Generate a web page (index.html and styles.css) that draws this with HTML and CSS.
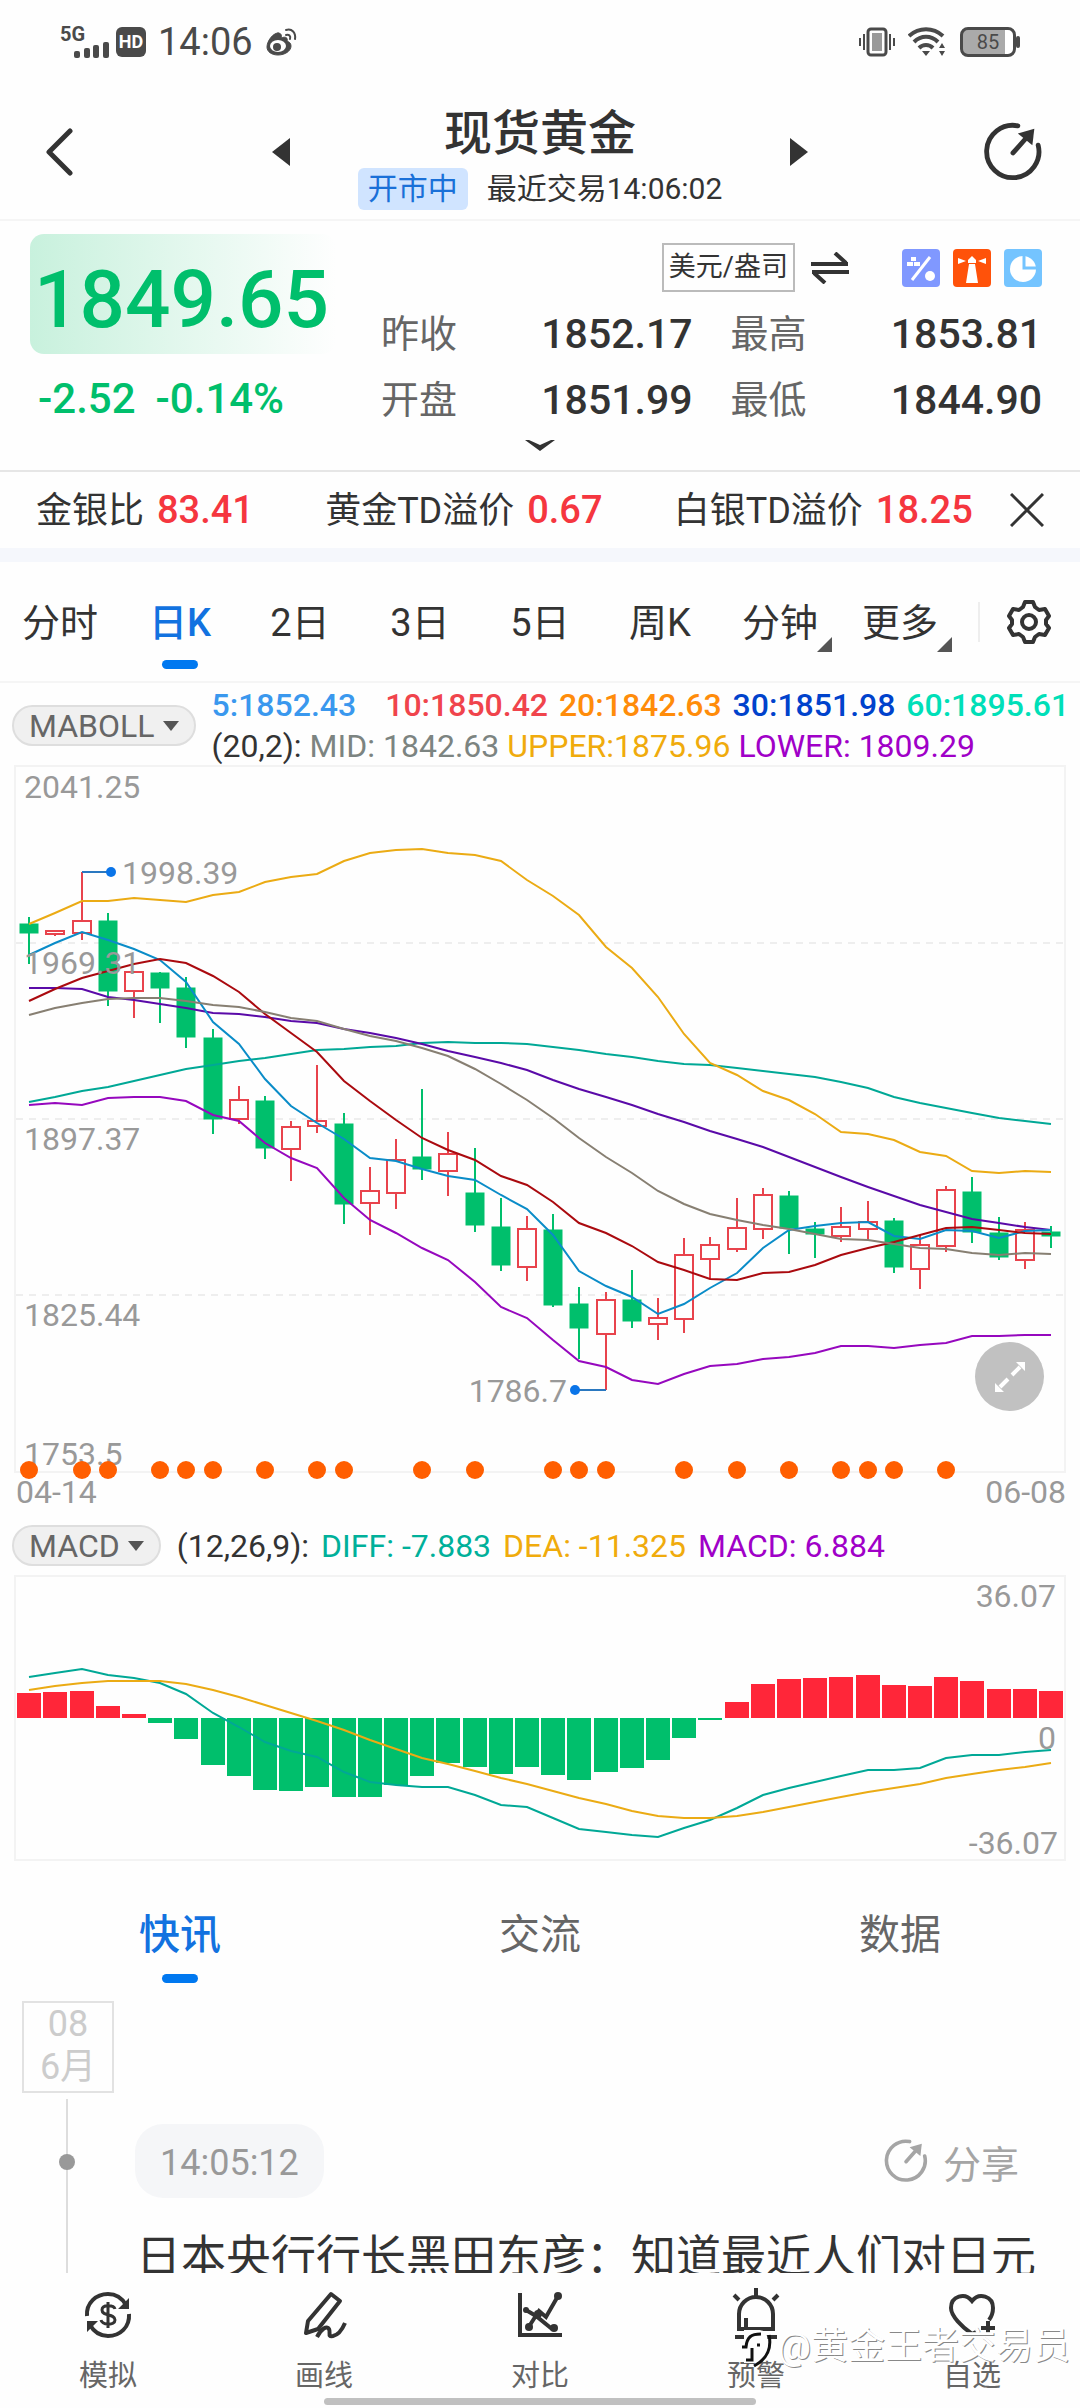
FILE: index.html
```html
<!DOCTYPE html>
<html lang="zh-CN">
<head>
    <meta charset="UTF-8">
    <meta name="viewport" content="width=device-width, initial-scale=1.0">
    <title>现货黄金</title>
    <link rel="stylesheet" href="styles.css">
</head>
<body>
    <div class="app">
        <div class="status-bar">
            <div class="status-left">
                <div class="signal">
                    <span>5G</span>
                    <svg width="36" height="16" viewBox="0 0 36 16" fill="#4a4a4a">
                        <rect x="0" y="9" width="6" height="7" rx="2"/>
                        <rect x="10" y="6" width="6" height="10" rx="2"/>
                        <rect x="19" y="3" width="6" height="13" rx="2"/>
                        <rect x="29" y="0" width="6" height="16" rx="2"/>
                    </svg>
                </div>
                <span class="hd">HD</span>
                <span class="clock">14:06</span>
                <svg width="32" height="30" viewBox="0 0 32 30" fill="none" stroke="#4a4a4a" stroke-width="3" stroke-linecap="round">
                    <path d="M13 6C8 6 2 14 2 20c0 5 5 8 11 8 7 0 13-4 13-9 0-3-2-4-4-5 1-3-1-5-6-3 1-3 0-5-3-5z" fill="#4a4a4a" stroke-width="1"/>
                    <ellipse cx="13" cy="19" rx="8" ry="6" fill="#fff" stroke="none"/>
                    <circle cx="12" cy="20" r="4" fill="#4a4a4a" stroke="none"/>
                    <path d="M21 8c3-1 5 1 4 4M21 3c6-2 10 3 9 9" stroke-width="2"/>
                </svg>
            </div>
            <div class="status-right">
                <svg width="38" height="30" viewBox="0 0 38 30" fill="none" stroke="#4a4a4a" stroke-width="3">
                    <rect x="10" y="2" width="18" height="26" rx="3"/>
                    <rect x="14" y="6" width="10" height="18" fill="#999" stroke="none"/>
                    <path d="M6 7v16M2 11v8M32 7v16M36 11v8" stroke-width="2"/>
                </svg>
                <svg width="40" height="30" viewBox="0 0 40 30" fill="none" stroke="#4a4a4a" stroke-width="4">
                    <path d="M1 9c10-9 24-9 34 0M6 15c7-7 17-7 24 0M11 21c4-4 10-4 14 0"/>
                    <path d="M14 24h8l-4 5zM31 21l3-5 3 5zM31 24l3 5 3-5z" fill="#4a4a4a" stroke="none"/>
                </svg>
                <div class="battery"><span>85</span></div>
            </div>
        </div>

        <header class="header">
            <button class="icon-btn" aria-label="返回">
                <svg width="28" height="48" viewBox="0 0 28 48" fill="none" stroke="#333" stroke-width="5" stroke-linecap="round" stroke-linejoin="round"><path d="M24 3L3 24l21 21"/></svg>
            </button>
            <div class="switcher">
                <button class="icon-btn" aria-label="上一个">
                    <svg width="18" height="28" viewBox="0 0 18 28" fill="#333"><path d="M18 0v28L0 14z"/></svg>
                </button>
                <div class="title">
                    <h1>现货黄金</h1>
                    <div class="subtitle"><span class="badge">开市中</span><span>最近交易14:06:02</span></div>
                </div>
                <button class="icon-btn" aria-label="下一个">
                    <svg width="18" height="28" viewBox="0 0 18 28" fill="#333"><path d="M0 0v28l18-14z"/></svg>
                </button>
            </div>
            <button class="icon-btn" aria-label="分享">
                <svg width="62" height="62" viewBox="0 0 64 64"><use href="#i-share"/></svg>
            </button>
        </header>

        <section class="quote">
            <div class="quote-price">
                <div class="price">1849.65</div>
                <div class="change"><span>-2.52</span><span>-0.14%</span></div>
            </div>
            <div class="quote-info">
                <div class="tools">
                    <button class="unit">美元/盎司</button>
                    <button class="icon-btn swap" aria-label="切换单位">
                        <svg width="38" height="32" viewBox="0 0 38 32" fill="none" stroke="#333" stroke-width="4"><path d="M0 12h37M24 1l11 10M38 20H1M14 31L3 21"/></svg>
                    </button>
                    <a href="#" class="tool" aria-label="比率">
                        <svg width="38" height="38" viewBox="0 0 38 38"><rect width="38" height="38" rx="4" fill="#8098ff"/><path d="M28 8L10 31" stroke="#fff" stroke-width="3"/><path d="M9 8h5v4H9zM5 13h6v4H5zM12 13h6v4h-6z" fill="#fff"/><circle cx="28" cy="27" r="5" fill="#fff"/></svg>
                    </a>
                    <a href="#" class="tool" aria-label="灯塔">
                        <svg width="38" height="38" viewBox="0 0 38 38"><rect width="38" height="38" rx="4" fill="#ff520a"/><path d="M16 15h6l3 19H13zM15 11l4-4 4 4v3h-8zM5 9l8 3-8 3zM33 9l-8 3 8 3z" fill="#fff"/></svg>
                    </a>
                    <a href="#" class="tool" aria-label="持仓">
                        <svg width="38" height="38" viewBox="0 0 38 38"><rect width="38" height="38" rx="4" fill="#74c4ff"/><circle cx="19" cy="20" r="13" fill="#fff"/><path d="M20 6v13h13" fill="none" stroke="#74c4ff" stroke-width="3"/></svg>
                    </a>
                </div>
                <dl class="stats">
                    <div><dt>昨收</dt><dd>1852.17</dd></div>
                    <div><dt>最高</dt><dd>1853.81</dd></div>
                    <div><dt>开盘</dt><dd>1851.99</dd></div>
                    <div><dt>最低</dt><dd>1844.90</dd></div>
                </dl>
            </div>
            <button class="icon-btn more" aria-label="展开">
                <svg width="30" height="11" viewBox="0 0 30 11" fill="#333"><path d="M0 0l4 0 11 5 11-5 4 0-15 11z"/></svg>
            </button>
        </section>

        <div class="premium">
            <span>金银比 <b>83.41</b></span>
            <span>黄金TD溢价 <b>0.67</b></span>
            <span>白银TD溢价 <b>18.25</b></span>
            <button class="icon-btn" aria-label="关闭">
                <svg width="34" height="34" viewBox="0 0 34 34" stroke="#333" stroke-width="3"><path d="M1 1l32 32M33 1L1 33"/></svg>
            </button>
        </div>

        <nav class="periods">
            <a href="#">分时</a>
            <a href="#" class="active">日K</a>
            <a href="#">2日</a>
            <a href="#">3日</a>
            <a href="#">5日</a>
            <a href="#">周K</a>
            <a href="#" class="drop">分钟</a>
            <a href="#" class="drop">更多</a>
            <button class="icon-btn settings" aria-label="设置">
                <svg width="46" height="46" viewBox="0 0 46 46" fill="none" stroke="#333" stroke-width="4" stroke-linejoin="round">
                    <path d="M19 3h8l2 5 4 3 6-1 4 7-3 4v4l3 4-4 7-6-1-4 3-2 5h-8l-2-5-4-3-6 1-4-7 3-4v-4l-3-4 4-7 6 1 4-3z"/>
                    <circle cx="23" cy="23" r="7"/>
                </svg>
            </button>
        </nav>

        <div class="indicator">
            <button class="pill">MABOLL <i></i></button>
            <div class="legend">
                <div class="ma">
                    <span class="c-ma5">5:1852.43</span>
                    <span class="c-ma10">10:1850.42</span>
                    <span class="c-ma20">20:1842.63</span>
                    <span class="c-ma30">30:1851.98</span>
                    <span class="c-ma60">60:1895.61</span>
                </div>
                <div class="values">
                    <span>(20,2):</span>
                    <span class="c-mid">MID: 1842.63</span>
                    <span class="c-gold">UPPER:1875.96</span>
                    <span class="c-purple">LOWER: 1809.29</span>
                </div>
            </div>
        </div>

        <div class="chart">
            <svg id="kline" viewBox="0 0 1048 704"></svg>
            <button class="expand" aria-label="全屏">
                <svg width="34" height="34" viewBox="0 0 34 34" fill="#fff" stroke="#fff" stroke-width="4"><path d="M19 15l8-8M15 19l-8 8" fill="none"/><path d="M32 2v9l-9-9zM2 32v-9l9 9z" stroke="none"/></svg>
            </button>
        </div>
        <div class="dates"><span>04-14</span><span>06-08</span></div>

        <div class="indicator macd-head">
            <button class="pill">MACD <i></i></button>
            <div class="values">
                <span>(12,26,9):</span>
                <span class="c-teal">DIFF: -7.883</span>
                <span class="c-gold">DEA: -11.325</span>
                <span class="c-purple">MACD: 6.884</span>
            </div>
        </div>
        <div class="chart">
            <svg id="macd" viewBox="0 0 1048 282"></svg>
        </div>

        <nav class="feed-tabs">
            <a href="#" class="active">快讯</a>
            <a href="#">交流</a>
            <a href="#">数据</a>
        </nav>

        <main class="feed">
            <div class="timeline">
                <div class="date"><span>08</span><span>6月</span></div>
                <div class="line"></div>
            </div>
            <article class="news">
                <div class="news-head">
                    <time>14:05:12</time>
                    <button class="share">
                        <svg width="46" height="46" viewBox="0 0 64 64"><use href="#i-share"/></svg>
                        分享
                    </button>
                </div>
                <p>日本央行行长黑田东彦：知道最近人们对日元</p>
            </article>
        </main>

        <footer class="bottom">
            <nav class="bottom-nav">
                <a href="#">
                    <svg width="48" height="48" viewBox="0 0 48 48" fill="none" stroke="#333" stroke-width="4">
                        <path d="M3 25C2 12 12 3 24 3c8 0 14 4 18 11M45 23c1 13-9 22-21 22-8 0-14-4-18-11"/>
                        <path d="M45 7v11H34zM3 41V30h11z" fill="#333" stroke="none"/>
                        <path d="M31 18c-1-4-13-5-13 1 0 7 13 3 13 10 0 6-13 5-14 0M24 11v26" stroke-width="3"/>
                    </svg>
                    模拟
                </a>
                <a href="#">
                    <svg width="48" height="48" viewBox="0 0 48 48" fill="none" stroke="#333" stroke-width="4" stroke-linejoin="round">
                        <path d="M31 3l9 7-22 28-12 4 2-12z"/>
                        <path d="M17 46c4-8 10-12 12-8s-2 8 4 7c5-1 9-6 12-13"/>
                    </svg>
                    画线
                </a>
                <a href="#">
                    <svg width="48" height="48" viewBox="0 0 48 48" fill="none" stroke="#333" stroke-width="4">
                        <path d="M4 2v42h42M10 19l10 6 16 13M12 37l11-17 7 6L42 5"/>
                        <g fill="#333" stroke="none"><circle cx="10" cy="19" r="3"/><circle cx="13" cy="36" r="4"/><circle cx="38" cy="37" r="4"/><circle cx="42" cy="5" r="4"/><circle cx="22" cy="23" r="4"/></g>
                    </svg>
                    对比
                </a>
                <a href="#">
                    <svg width="48" height="48" viewBox="0 0 48 48" fill="none" stroke="#333" stroke-width="4" overflow="visible">
                        <path d="M7 38V23a17 17 0 0 1 34 0v15zM14 38V27M24-3v8M2 4l5 5M46 4l-5 5M3 46h42"/>
                    </svg>
                    预警
                </a>
                <a href="#">
                    <svg width="48" height="48" viewBox="0 0 48 48" fill="none" stroke="#333" stroke-width="4">
                        <path d="M41 29c3-4 4-8 4-12C45 5 31 1 24 10 17 1 3 5 3 17c0 8 11 19 21 26l4-2M40 30v14M33 37h14"/>
                    </svg>
                    自选
                </a>
            </nav>
            <div class="home-bar"></div>
            <div class="watermark">
                <svg width="34" height="44" viewBox="0 0 34 44" fill="none">
                    <path d="M4 5h14c10 0 11 8 8 20-2 9-6 13-12 13H4z" fill="#fefefe"/>
                    <path d="M2 22h4c1-10 5-13 15-13M6 35h6V23M29 10c3 14-2 24-15 31M17 20h3" stroke="#111" stroke-width="3"/>
                </svg>
                <span>@黄金王者交易员</span>
            </div>
        </footer>
    </div>

    <svg width="0" height="0" class="sprite">
        <symbol id="i-share" viewBox="0 0 64 64">
            <path d="M37 5A27 27 0 1 0 58 25" fill="none" stroke="currentColor" stroke-width="5" stroke-linecap="round"/>
            <path d="M32 33l15-17" stroke="currentColor" stroke-width="5" stroke-linecap="round"/>
            <path d="M54 8l-2 17-15-12z" fill="currentColor"/>
        </symbol>
    </svg>

    <script src="script.js"></script>
</body>
</html>
```
FILE: styles.css
```css
* {
    box-sizing: border-box;
}
body {
    margin: 0;
    background-color: #fefefe;
    color: #333;
    font-family: Roboto, "Noto Sans CJK SC", sans-serif;
}
h1, p, dl, dd {
    margin: 0;
}
a {
    color: inherit;
    text-decoration: none;
}
button {
    font: inherit;
    color: inherit;
    background: none;
    border: none;
    padding: 0;
    cursor: pointer;
}
svg {
    display: block;
}
.sprite {
    position: absolute;
}
.app {
    display: flex;
    flex-direction: column;
    height: 100vh;
    overflow: hidden;
}
.app > * {
    flex-shrink: 0;
}
.icon-btn {
    display: flex;
    align-items: center;
    justify-content: center;
}

/* status bar */
.status-bar {
    display: flex;
    justify-content: space-between;
    align-items: center;
    height: 84px;
    padding: 0 60px;
    color: #4a4a4a;
}
.status-left, .status-right {
    display: flex;
    align-items: center;
    gap: 12px;
}
.signal {
    display: flex;
    flex-direction: column;
    align-items: flex-end;
    width: 50px;
    margin-right: -6px;
}
.signal span {
    align-self: flex-start;
    font-size: 20px;
    line-height: 15px;
    font-weight: bold;
}
.hd {
    width: 30px;
    border-radius: 6px;
    background-color: #4a4a4a;
    color: white;
    font-size: 18px;
    line-height: 30px;
    font-weight: bold;
    text-align: center;
}
.clock {
    font-size: 38px;
    line-height: 40px;
}
.battery {
    position: relative;
    width: 56px;
    height: 30px;
    margin-right: 4px;
    border: 3px solid #4a4a4a;
    border-radius: 8px;
    background: linear-gradient(90deg, #aaa 84%, white 84%);
    font-size: 20px;
    line-height: 24px;
    text-align: center;
}
.battery::after {
    content: "";
    position: absolute;
    right: -7px;
    top: 6px;
    width: 4px;
    height: 12px;
    border-radius: 2px;
    background-color: #4a4a4a;
}

/* header */
.header {
    display: flex;
    justify-content: space-between;
    align-items: flex-start;
    padding: 21px 36px 9px 46px;
    border-bottom: 2px solid #f5f5f5;
}
.header .icon-btn {
    height: 94px;
}
.switcher {
    display: flex;
    justify-content: space-between;
    width: 536px;
    margin-left: 24px;
}
.title {
    text-align: center;
}
.title h1 {
    font-size: 48px;
    line-height: 58px;
    font-weight: 500;
    margin-bottom: 5px;
}
.subtitle {
    display: flex;
    gap: 19px;
    font-size: 30px;
    line-height: 42px;
}
.badge {
    padding: 0 10px;
    border-radius: 6px;
    background-color: #d0e4ff;
    color: #1a70d8;
}

/* quote */
.quote {
    display: grid;
    grid-template-columns: 351px 1fr;
    padding: 13px 38px 0 30px;
    border-bottom: 2px solid #e6e6e6;
}
.price {
    width: 306px;
    height: 120px;
    padding: 6px 0 0 4px;
    border-radius: 14px;
    background: linear-gradient(90deg, #c8f1dd, #fefefe);
    color: #00bf6c;
    font-size: 80px;
    line-height: 120px;
    font-weight: 500;
    margin-bottom: 12px;
}
.change {
    display: flex;
    gap: 20px;
    padding-left: 8px;
    color: #00bf6c;
    font-size: 42px;
    line-height: 66px;
    font-weight: 500;
}
.tools {
    display: flex;
    justify-content: flex-end;
    align-items: center;
    gap: 13px;
    height: 67px;
}
.unit {
    border: 2px solid #bbb;
    padding: 0 5px;
    font-size: 27px;
    line-height: 45px;
}
.swap {
    margin: 0 40px 0 3px;
}
.stats {
    display: grid;
    grid-template-columns: 1fr 1fr;
    column-gap: 38px;
}
.stats div {
    display: flex;
    justify-content: space-between;
    font-size: 41px;
    line-height: 66px;
}
.stats dt {
    color: #666;
    font-size: 38px;
}
.stats dd {
    font-weight: 500;
}
.more {
    grid-column: 1 / 3;
    height: 37px;
    padding: 0 0 12px 8px;
}

/* premium strip */
.premium {
    display: flex;
    justify-content: space-between;
    align-items: center;
    height: 90px;
    padding: 0 36px;
    border-bottom: 14px solid #f5f7fc;
    font-size: 36px;
    line-height: 74px;
}
.premium b {
    color: #f5363f;
    font-size: 38px;
    font-weight: 500;
    margin-left: 4px;
}
.premium .icon-btn {
    margin-left: -34px;
}

/* periods */
.periods {
    display: flex;
    align-items: center;
    height: 121px;
    border-bottom: 2px solid #f5f5f5;
    font-size: 38px;
}
.periods a {
    position: relative;
    flex: 1;
    padding-top: 4px;
    line-height: 115px;
    text-align: center;
}
.active {
    color: #1272e0;
    font-weight: 500;
}
.periods .active::after, .feed-tabs .active::after {
    content: "";
    position: absolute;
    left: calc(50% - 18px);
    bottom: 12px;
    width: 36px;
    height: 9px;
    border-radius: 5px;
    background-color: #0078f0;
}
.drop::after {
    content: "";
    position: absolute;
    right: 8px;
    bottom: 29px;
    border-left: 15px solid transparent;
    border-bottom: 15px solid #555;
}
.settings {
    width: 118px;
    height: 40px;
    margin-left: 18px;
    margin-right: -16px;
    padding-right: 18px;
    border-left: 2px solid #eee;
}

/* indicators */
.indicator {
    display: flex;
    align-items: center;
    gap: 16px;
    padding: 3px 0 0 12px;
    height: 82px;
    font-size: 32px;
}
.pill {
    display: flex;
    align-items: center;
    gap: 8px;
    height: 41px;
    padding: 0 15px;
    border: 2px solid #dedede;
    border-radius: 21px;
    background-color: #f0f0f0;
    color: #666;
}
.pill i {
    border: 8px solid transparent;
    border-top: 10px solid #555;
    border-bottom: none;
}
.legend {
    flex: 1;
    line-height: 41px;
}
.ma {
    display: grid;
    grid-template-columns: repeat(5, 1fr);
    font-weight: 500;
    white-space: nowrap;
}
.values {
    display: flex;
    gap: 8px;
    white-space: nowrap;
}
.c-ma5 { color: #3a98ee; }
.c-ma10 { color: #f0444c; }
.c-ma20 { color: #ff8c0a; }
.c-ma30 { color: #0042cc; }
.c-ma60 { color: #00dfb8; }
.c-mid { color: #7c8481; }
.c-gold { color: #f0ab0c; }
.c-purple { color: #a000c8; }
.c-teal { color: #00b09a; }

/* charts */
.chart {
    position: relative;
    margin: 0 14px;
    border: 2px solid #f3f3f3;
}
.chart svg {
    width: 100%;
    overflow: visible;
}
.chart text {
    fill: #999;
    font-size: 32px;
}
.chart polyline {
    fill: none;
    stroke-width: 2;
}
.expand {
    position: absolute;
    right: 20px;
    bottom: 60px;
    display: flex;
    align-items: center;
    justify-content: center;
    width: 69px;
    height: 69px;
    border-radius: 50%;
    background-color: #c1c1c1;
}
.chart .expand svg {
    width: 34px;
}
.dates {
    display: flex;
    justify-content: space-between;
    padding: 0 14px 0 16px;
    color: #999;
    font-size: 32px;
    line-height: 38px;
}
.macd-head {
    height: 64px;
    padding-top: 5px;
}
.macd-head .values {
    gap: 12px;
}

/* feed */
.feed-tabs {
    display: flex;
    color: #666;
    font-size: 41px;
}
.feed-tabs a {
    position: relative;
    flex: 1;
    padding-top: 9px;
    line-height: 131px;
    text-align: center;
}
.feed-tabs a.active::after {
    bottom: 18px;
}
.app > .feed {
    flex: 1 1 0;
    min-height: 0;
    display: flex;
    gap: 21px;
    overflow: hidden;
    padding-left: 22px;
}
.timeline {
    display: flex;
    flex-direction: column;
    width: 92px;
}
.date {
    display: flex;
    flex-direction: column;
    height: 92px;
    border: 2px solid #e2e2e2;
    color: #ccc;
    font-size: 36px;
    line-height: 43px;
    text-align: center;
}
.line {
    position: relative;
    flex: 1;
    width: 2px;
    margin: 6px 0 0 44px;
    background-color: #ddd;
}
.line::after {
    content: "";
    position: absolute;
    left: -7px;
    top: 55px;
    width: 16px;
    height: 16px;
    border-radius: 50%;
    background-color: #999;
}
.news {
    flex: 1;
    padding-top: 123px;
}
.news-head {
    display: flex;
    justify-content: space-between;
    align-items: center;
    padding-right: 61px;
    color: #999;
}
.news time {
    height: 74px;
    padding: 2px 25px 0;
    border-radius: 28px;
    background-color: #f5f6f8;
    font-size: 36px;
    line-height: 74px;
}
.share {
    display: flex;
    align-items: center;
    gap: 14px;
    font-size: 38px;
    color: #a5a5a5;
}
.news p {
    padding: 26px 0 0 1px;
    font-size: 45px;
    line-height: 68px;
    white-space: nowrap;
}

/* bottom bar */
.bottom {
    position: relative;
    height: 135px;
    background-color: #fefefe;
}
.bottom-nav {
    display: flex;
    padding-top: 18px;
    color: #666;
    font-size: 29px;
    line-height: 40px;
}
.bottom-nav a {
    flex: 1;
    display: flex;
    flex-direction: column;
    align-items: center;
    gap: 17px;
}
.home-bar {
    position: absolute;
    left: 30%;
    bottom: 3px;
    width: 40%;
    height: 7px;
    border-radius: 4px;
    background-color: #c0c0c0;
}
.watermark {
    position: absolute;
    right: 10px;
    bottom: 35px;
    display: flex;
    align-items: center;
    gap: 4px;
    color: white;
    font-size: 37px;
    line-height: 52px;
    text-shadow: 1px 1px 0 #888;
}
```
FILE: script.js
```javascript
const STEP = 1048 / 40;
const RED = '#e8434c';
const GREEN = '#00bf6c';

// [up, high, body top, body bottom, low]
const candles = [
    [0, 150, 157, 166, 197], [1, 163, 164, 167, 169], [1, 105, 154, 166, 173], [0, 146, 154, 224, 239],
    [1, 204, 205, 224, 251], [0, 205, 206, 221, 256], [0, 210, 221, 270, 281], [0, 262, 271, 352, 367],
    [1, 319, 333, 352, 357], [0, 329, 334, 381, 392], [1, 354, 360, 382, 414], [1, 298, 354, 359, 366],
    [0, 346, 357, 437, 457], [1, 400, 424, 436, 468], [1, 372, 393, 426, 442], [0, 322, 390, 402, 413],
    [1, 365, 387, 404, 429], [0, 381, 426, 458, 465], [0, 431, 460, 498, 504], [1, 449, 462, 500, 514],
    [0, 447, 463, 538, 540], [0, 520, 537, 561, 592], [1, 525, 533, 567, 623], [0, 503, 533, 554, 561],
    [1, 531, 551, 557, 573], [1, 471, 488, 552, 566], [1, 470, 478, 492, 512], [1, 431, 461, 482, 485],
    [1, 421, 428, 462, 472], [0, 424, 429, 461, 487], [0, 455, 462, 467, 491], [1, 440, 460, 469, 475],
    [1, 434, 455, 462, 474], [0, 451, 454, 500, 506], [1, 468, 478, 502, 522], [1, 419, 423, 479, 485],
    [0, 410, 425, 465, 476], [0, 450, 466, 490, 493], [1, 455, 463, 493, 502], [0, 459, 465, 469, 481]
];

const lines = {
    '#00a896': [335, 330, 324, 320, 314, 308, 302, 298, 294, 291, 287, 283, 282, 280, 279, 276, 275, 276, 276, 277, 280, 283, 287, 290, 294, 297, 298, 301, 304, 307, 310, 315, 321, 330, 336, 341, 346, 351, 354, 357],
    '#5a0aa8': [221, 221, 222, 230, 233, 237, 241, 246, 247, 250, 254, 256, 262, 266, 271, 277, 284, 290, 296, 303, 313, 322, 330, 338, 347, 355, 364, 372, 380, 390, 400, 410, 420, 429, 438, 445, 452, 456, 460, 463],
    '#0a8cc8': [188, 176, 165, 173, 182, 193, 215, 255, 277, 312, 339, 356, 372, 391, 394, 402, 409, 413, 428, 442, 468, 504, 519, 530, 547, 537, 521, 506, 481, 463, 459, 456, 455, 469, 472, 463, 464, 471, 464, 463],
    '#aa0a0f': [234, 222, 211, 204, 197, 192, 196, 209, 225, 247, 266, 285, 314, 334, 353, 371, 383, 393, 409, 418, 435, 456, 466, 479, 495, 503, 512, 513, 506, 505, 498, 488, 481, 475, 468, 461, 460, 463, 466, 467],
    '#877f72': [248, 241, 236, 232, 231, 231, 234, 238, 240, 245, 251, 254, 262, 269, 274, 281, 289, 302, 317, 333, 351, 371, 390, 406, 424, 437, 447, 453, 458, 462, 467, 472, 473, 477, 481, 482, 486, 488, 486, 487],
    '#ebab14': [157, 146, 134, 134, 131, 133, 135, 128, 125, 115, 110, 107, 94, 86, 83, 82, 86, 88, 94, 113, 129, 148, 180, 201, 230, 267, 296, 308, 324, 333, 347, 365, 367, 373, 385, 389, 404, 406, 404, 405],
    '#9608be': [338, 336, 338, 331, 330, 330, 334, 348, 354, 376, 391, 401, 431, 453, 466, 481, 493, 515, 540, 551, 573, 594, 600, 613, 617, 607, 599, 597, 592, 590, 586, 579, 579, 581, 578, 576, 569, 569, 568, 568]
};

const events = [0, 2, 3, 5, 6, 7, 9, 11, 12, 15, 17, 20, 21, 22, 25, 27, 29, 31, 32, 33, 35];

const bars = [116, 115, 114, 129, 137, 146, 162, 188, 199, 213, 214, 210, 220, 220, 208, 199, 186, 190, 197, 190, 198, 203, 195, 191, 183, 161, 143, 125, 107, 102, 101, 100, 98, 108, 109, 100, 104, 112, 112, 114];
const diff = [100, 96, 92, 98, 101, 106, 117, 136, 150, 165, 174, 180, 195, 205, 208, 210, 210, 218, 228, 230, 241, 252, 255, 258, 260, 251, 243, 231, 218, 211, 205, 199, 193, 193, 191, 181, 178, 178, 175, 173];
const dea = [113, 109, 106, 104, 104, 104, 107, 113, 120, 128, 136, 144, 153, 163, 172, 181, 187, 194, 201, 207, 214, 221, 227, 234, 239, 241, 241, 239, 235, 230, 225, 220, 215, 211, 207, 201, 197, 193, 190, 186];

function cx(i) {
    return Math.round(STEP * (i + 0.5));
}

function polyline(values, color) {
    const points = values.map((y, i) => `${cx(i)},${y}`).join(' ');
    return `<polyline points="${points}" stroke="${color}"/>`;
}

function drawKline() {
    let out = '';
    [176, 352, 528].forEach(y => {
        out += `<path d="M0 ${y}H1048" stroke="#eee" stroke-width="2" stroke-dasharray="7 6"/>`;
    });
    candles.forEach(([up, high, top, bottom, low], i) => {
        const x = cx(i);
        const color = up ? RED : GREEN;
        out += `<path d="M${x} ${high}V${top}M${x} ${bottom}V${low}" stroke="${color}" stroke-width="2"/>`;
        out += `<rect x="${x - 9}" y="${top}" width="18" height="${bottom - top}" fill="${up ? 'none' : color}" stroke="${color}" stroke-width="${up ? 2 : 1}"/>`;
    });
    for (const color in lines) {
        out += polyline(lines[color], color);
    }
    // highest and lowest price markers
    out += `<path d="M${cx(2)} 105H95M${cx(22)} 623H559" stroke="#2a78c0" stroke-width="2"/>`;
    out += `<circle cx="95" cy="105" r="5" fill="#0a74e8"/><circle cx="559" cy="623" r="5" fill="#0a74e8"/>`;
    out += `<text x="106" y="117">1998.39</text><text x="551" y="635" text-anchor="end">1786.7</text>`;
    [['2041.25', 31], ['1969.31', 207], ['1897.37', 383], ['1825.44', 559], ['1753.5', 698]].forEach(([label, y]) => {
        out += `<text x="8" y="${y}">${label}</text>`;
    });
    events.forEach(i => {
        out += `<circle cx="${cx(i)}" cy="703" r="9" fill="#ff5e00"/>`;
    });
    document.getElementById('kline').innerHTML = out;
}

function drawMacd() {
    const zero = 141;
    let out = '';
    bars.forEach((y, i) => {
        const top = Math.min(y, zero);
        out += `<rect x="${cx(i) - 12}" y="${top}" width="24" height="${Math.abs(y - zero)}" fill="${y < zero ? '#ff2639' : GREEN}"/>`;
    });
    out += polyline(diff, '#00a896') + polyline(dea, '#ebab14');
    out += '<text x="1040" y="30" text-anchor="end">36.07</text>';
    out += '<text x="1040" y="172" text-anchor="end">0</text>';
    out += '<text x="1042" y="277" text-anchor="end">-36.07</text>';
    document.getElementById('macd').innerHTML = out;
}

drawKline();
drawMacd();
```
